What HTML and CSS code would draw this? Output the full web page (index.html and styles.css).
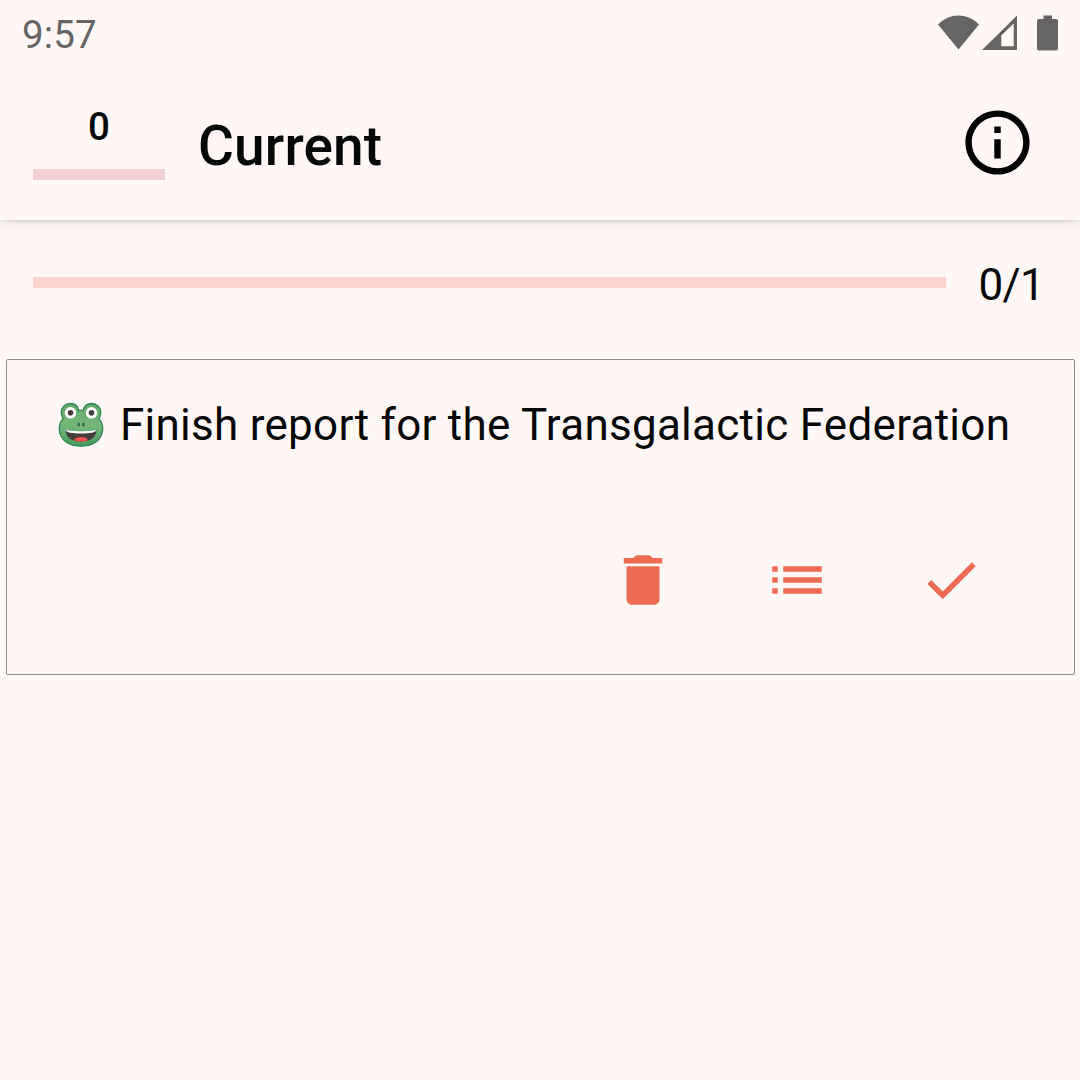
FILE: index.html
```html
<!DOCTYPE html>
<html lang="en">
<head>
<meta charset="utf-8">
<title>Current</title>
<link rel="stylesheet" href="styles.css">
</head>
<body>
<div class="status">
  <span class="clock">9:57</span>
  <svg class="status-icons" width="122" height="38" viewBox="0 0 122 38" fill="currentColor">
    <path d="M20.500 35.500 0 10.500Q9 1.500 20.500 1.500T41 10.500Z"/>
    <path fill-rule="evenodd" d="M44 36 79 1.500V36ZM63.300 21.500V32.300H75.700V9.500Z"/>
    <path d="M105.500 1.500h8.500V5h4a2 2 0 0 1 2 2V34.500a2 2 0 0 1-2 2H101a2 2 0 0 1-2-2V7a2 2 0 0 1 2-2h4.500Z"/>
  </svg>
</div>
<header class="appbar">
  <div class="counter"><span class="count">0</span><div class="count-bar"></div></div>
  <h1 class="title">Current</h1>
  <svg class="info" viewBox="0 0 24 24"><path d="M11 7h2v2h-2zm0 4h2v6h-2zm1-9C6.480 2 2 6.480 2 12s4.480 10 10 10 10-4.480 10-10S17.520 2 12 2zm0 18c-4.410 0-8-3.590-8-8s3.590-8 8-8 8 3.590 8 8-3.590 8-8 8z"/></svg>
</header>
<main>
  <div class="progress"><div class="track"></div><span class="ratio">0/1</span></div>
  <section class="card">
    <div class="task">
      <svg class="frog" width="48" height="46" viewBox="0 0 48 46">
        <defs>
          <linearGradient id="skin" x1="0" y1="0" x2="0" y2="1"><stop offset="0" stop-color="#5faa6b"/><stop offset=".5" stop-color="#77b67a"/><stop offset="1" stop-color="#459a60"/></linearGradient>
        </defs>
        <path d="M13.500 1.500C18 1.500 21 4 21.700 8.500Q24 7.800 26.300 8.500C27 4 30 1.500 34.500 1.500C40 1.500 44 5.500 43.800 10.500C43.700 13 42.500 15.500 42 17Q45.800 21 45.700 27C45.500 38 36 44 24 44S2.500 38 2.300 27Q2.200 21 6 17C5.500 15.500 4.300 13 4.200 10.500C4 5.500 8 1.500 13.500 1.500Z" fill="url(#skin)" stroke="#328658" stroke-width="1.300"/>
        <circle cx="13.500" cy="10.800" r="5.800" fill="#fff"/><circle cx="34.500" cy="10.800" r="5.800" fill="#fff"/>
        <circle cx="13.500" cy="10.800" r="2.800" fill="#443c3a"/><circle cx="34.500" cy="10.800" r="2.800" fill="#443c3a"/>
        <ellipse cx="21.800" cy="22.500" rx="1.100" ry="1.900" fill="#286044"/><ellipse cx="26.400" cy="22.500" rx="1.100" ry="1.900" fill="#286044"/>
        <path d="M8.500 28Q24 30.500 39.500 28C39 35 34 39.500 24 39.500S9 35 8.500 28Z" fill="#433c39"/>
        <path d="M8.500 28Q24 30.500 39.500 28C38.800 30.500 33 31.500 24 31.500S9.200 30.500 8.500 28Z" fill="#fff"/>
        <path d="M17 38.200Q19 35 24 35T31 38.200Q28 39.500 24 39.500T17 38.200Z" fill="#fb5050"/>
      </svg>
      <span class="task-text">Finish report for the Transgalactic Federation</span>
    </div>
    <div class="actions">
      <svg viewBox="0 0 24 24"><path d="M6 19c0 1.100.9 2 2 2h8c1.100 0 2-.9 2-2V7H6v12zM19 4h-3.500l-.71-.71c-.18-.18-.44-.29-.7-.29H9.910c-.26 0-.52.110-.7.290L8.500 4H5v2h14V4z"/></svg>
      <svg viewBox="0 0 24 24"><path d="M3 13h2v-2H3v2zm0 4h2v-2H3v2zm0-8h2V7H3v2zm4 4h14v-2H7v2zm0 4h14v-2H7v2zM7 7v2h14V7H7z"/></svg>
      <svg viewBox="0 0 24 24"><path d="M9 16.170 4.830 12l-1.420 1.410L9 19 21 7l-1.410-1.410z"/></svg>
    </div>
  </section>
</main>
</body>
</html>
```
FILE: styles.css
```css
* { box-sizing: border-box; }
body {
  margin: 0;
  height: 1080px;
  overflow: hidden;
  background: #fff8f6;
  color: #050706;
  font-family: Roboto, "Noto Sans", sans-serif;
}
svg { display: block; flex: none; }
.status {
  display: flex;
  justify-content: space-between;
  height: 66px;
  padding: 14px 20px 0 22px;
  color: #666563;
}
.clock { font-size: 38.5px; line-height: 42px; letter-spacing: .1px; }
.appbar {
  display: flex;
  height: 154px;
  padding: 0 44px 0 33px;
  box-shadow: 0 3px 14px rgba(0, 0, 0, .11), 0 1px 3px rgba(0, 0, 0, .1);
  clip-path: inset(0 0 -24px 0);
}
.counter { width: 132px; padding-top: 38px; text-align: center; }
.count { display: block; font-size: 38.5px; line-height: 46px; font-weight: 500; }
.count-bar { height: 11px; margin-top: 19px; background: #f0d0d1; }
.title {
  flex: 1;
  margin: 47px 0 0 33px;
  font-size: 55px;
  line-height: 66px;
  font-weight: 500;
  letter-spacing: .15px;
}
.info { width: 77px; height: 77px; margin-top: 38px; }
.progress {
  display: flex;
  align-items: flex-start;
  justify-content: space-between;
  height: 139px;
  padding: 38px 36px 0 33px;
}
.track { width: 913px; height: 11px; margin-top: 19px; background: #fad3cc; }
.ratio { margin-top: 1px; font-size: 44px; line-height: 52px; letter-spacing: -.7px; }
.card {
  height: 316px;
  margin: 0 5px 0 6px;
  border: 1px solid #8e8b88;
  border-radius: 2px;
}
.task { display: flex; height: 187px; padding: 39px 0 0 50.4px; }
.frog { margin-top: 3px; }
.task-text {
  margin-left: 14.6px;
  font-size: 44px;
  line-height: 52px;
  letter-spacing: .27px;
  white-space: nowrap;
}
.actions { display: flex; justify-content: flex-end; gap: 88px; padding-right: 90px; }
.actions svg { width: 66px; height: 66px; fill: #ed6b53; }
```
